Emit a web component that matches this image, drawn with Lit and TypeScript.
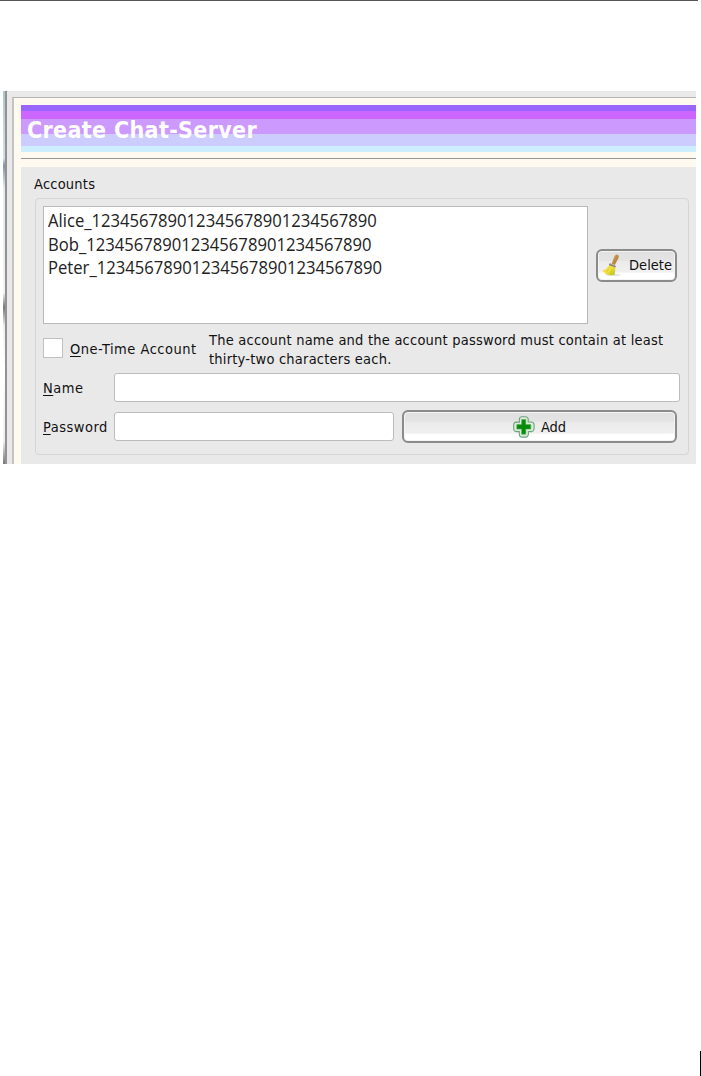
import { LitElement, html, css, svg } from "lit";
import { customElement, property } from "lit/decorators.js";

const broomIcon = svg`
  <defs>
    <linearGradient id="handle" x1="0" y1="0" x2="1" y2="1">
      <stop offset="0" stop-color="#d9ad62" />
      <stop offset="1" stop-color="#a96c32" />
    </linearGradient>
    <linearGradient id="straw" x1="0" y1="0" x2="1" y2="1">
      <stop offset="0" stop-color="#ecc440" />
      <stop offset="0.5" stop-color="#f2e63a" />
      <stop offset="1" stop-color="#b5bd1c" />
    </linearGradient>
  </defs>
  <ellipse cx="12" cy="20.8" rx="8" ry="1.2" fill="#bbb" opacity="0.4" />
  <path d="M13.6 2Q15.6 -.2 17.2 .9Q18.2 2.2 17.2 4.6L13.8 11.1L10.6 9.7Z" fill="url(#handle)" />
  <path d="M8.4 10.7L14.2 13.2Q14.4 17.6 13.6 20.8L9.4 21.2L4.8 20L1.4 16.7Q6.2 15.3 8.4 10.7Z" fill="url(#straw)" />
  <path d="M5 18.2L9.4 13.2M9 20L11.8 14.6" stroke="#d8b32a" stroke-width="0.6" fill="none" />
  <path d="M8.8 9.3L14.9 11.9L14.3 13.5L8 10.9Z" fill="#77737c" />
  <path d="M9.3 10L14.3 12.2" stroke="#c5b5a0" stroke-width="0.6" />
`;

const plusIcon = svg`
  <path d="M6.4 2.6Q6.8 .8 8.6 .7H12.6Q14.6 .8 15.2 2.6V6H18.4Q20.8 6.3 21.1 8.2V13Q20.8 15.3 18.6 15.6H15.4V18.6Q15 20.8 12.8 21.1H8.6Q6.6 20.8 6.3 18.8V15.6H3.2Q.9 15.3 .7 13.2V8.4Q.9 6.3 3 6.1H6.4Z"
    fill="#dcebdc" stroke="#6ba37a" stroke-width="1.1" />
  <path d="M8.6 3.6H12.8V8.6H17.8V13.1H12.8V18.2H8.6V13.1H3.8V8.6H8.6Z" fill="#078b0c" stroke="#55ac55" stroke-width="0.6" />
`;

@customElement("tool-button")
export class ToolButton extends LitElement {
  @property() label = "";
  @property() icon = "";

  static styles = css`
    :host {
      display: block;
      box-sizing: border-box;
    }

    .button {
      box-sizing: border-box;
      width: 100%;
      height: 33px;
      display: flex;
      align-items: center;
      justify-content: center;
      gap: 5px;
      padding: 0;
      border: 2px solid #8b8b8b;
      border-radius: 6px;
      background: linear-gradient(#e0e0e0 0, #e4e4e4 33%, #ebebeb 36%, #f0f0f0 72%, #fff 78%);
      box-shadow: inset 0 0 0 1px #f4f4f4;
      color: #111;
      font: inherit;
      letter-spacing: 0;
    }

    .icon {
      flex: none;
      width: 22px;
      height: 22px;
    }

    .text {
      padding: 1px 0 0 1px;
    }
  `;

  render() {
    return html`
      <button class="button">
        <svg class="icon" viewBox="0 0 22 22">${this.icon === "broom" ? broomIcon : plusIcon}</svg>
        <span class="text">${this.label}</span>
      </button>
    `;
  }
}

@customElement("app-root")
export class AppRoot extends LitElement {
  accounts = ["Alice", "Bob", "Peter"];

  static styles = css`
    :host {
      display: block;
      box-sizing: border-box;
      position: relative;
      height: 1076px;
      overflow: hidden;
      background: white;
      color: #111;
      font: 14.5px/19px "DejaVu Sans Condensed", "DejaVu Sans", sans-serif;
      font-stretch: condensed;
      letter-spacing: 0.22px;
    }

    *, *:before, *:after {
      box-sizing: border-box;
    }

    .page-rule {
      width: 698px;
      height: 1px;
      background: #555;
    }

    .change-bar {
      position: absolute;
      right: 0;
      bottom: 0;
      width: 1px;
      height: 25px;
      background: #000;
    }

    .window {
      display: flex;
      width: 693px;
      height: 373px;
      margin: 90px 0 0 3px;
      background: #e9e9e9;
    }

    .edge {
      width: 4px;
      border-right: 2px solid #929292;
      background: linear-gradient(#a9c9cb 0, #c6d4db 9%, #cfe2ee 18%, #8297ad 20%, #e4edf0 26%, #ececec 45%, #f4f4f4 54%, #777 58%, #eee 63%, #fff 75%, #eee 94%, #777 100%);
    }

    .panel {
      flex: 1;
      display: flex;
      flex-direction: column;
      margin: 6px 0 0 5px;
      padding: 7px 0 0 7px;
      border-top: 1px solid #b4b4b4;
      border-left: 2px solid #c4c4c4;
      background: #fffaf0;
    }

    .banner {
      height: 47px;
      margin: 0;
      padding: 11px 0 0 6px;
      background: linear-gradient(#9966ff 0 6px, #cc66ff 6px 14px, #cc99ff 14px 29.5px, #ccccff 29.5px 41px, #cceeff 41px);
      color: white;
      font: bold 23px/28px "DejaVu Sans Condensed", "DejaVu Sans", sans-serif;
      font-stretch: condensed;
      letter-spacing: 0.35px;
    }

    .rule {
      height: 1px;
      margin: 6px 0 8px;
      background: #969696;
    }

    .content {
      flex: 1;
      padding: 8px 7px 0 14px;
      background: #e9e9e9;
    }

    .group-title {
      margin-left: -1px;
      height: 23px;
    }

    .group {
      display: flex;
      flex-direction: column;
      height: 257px;
      padding: 7px 8px 0 7px;
      border: 1px solid #d5d5d5;
      border-radius: 4px;
    }

    .row {
      display: flex;
      align-items: center;
    }

    .accounts {
      width: 545px;
      height: 118px;
      margin: 0;
      padding: 2px 4px;
      border: 1px solid #b9b9b9;
      background: white;
      list-style: none;
      font: 18px/23.5px "Open Sans", sans-serif;
      letter-spacing: 0;
      color: #222;
    }

    .account {
      transform: scaleX(0.924);
      transform-origin: left;
    }

    .delete {
      width: 81px;
      margin-left: 8px;
    }

    .options {
      height: 49px;
    }

    .checkbox {
      width: 20px;
      height: 20px;
      margin-bottom: 1px;
      border: 1px solid #c0c0c0;
      background: white;
    }

    .one-time {
      width: 146px;
      padding: 1px 0 0 7px;
      letter-spacing: 0.5px;
    }

    .hint {
      margin: 2px 0 0;
      white-space: nowrap;
    }

    .label {
      width: 71px;
      padding-top: 1px;
      letter-spacing: 0.5px;
    }

    .key {
      text-decoration: underline;
      text-underline-offset: 2px;
    }

    .field {
      height: 29px;
      border: 1px solid #bcbcbc;
      border-radius: 3px;
      background: white;
    }

    .name {
      width: 566px;
    }

    .password {
      width: 280px;
    }

    .add {
      width: 275px;
      margin-left: 8px;
    }

    .password-row {
      margin-top: 8px;
    }
  `;

  render() {
    return html`
      <div class="page-rule"></div>
      <div class="window">
        <div class="edge"></div>
        <div class="panel">
          <h1 class="banner">Create Chat-Server</h1>
          <div class="rule"></div>
          <div class="content">
            <div class="group-title">Accounts</div>
            <div class="group">
              <div class="row">
                <ul class="accounts">
                  ${this.accounts.map((name) => html`<li class="account">${name}_${"1234567890".repeat(3)}</li>`)}
                </ul>
                <tool-button class="delete" icon="broom" label="Delete"></tool-button>
              </div>
              <div class="row options">
                <div class="checkbox"></div>
                <div class="one-time"><span class="key">O</span>ne-Time Account</div>
                <p class="hint">
                  The account name and the account password must contain at least<br />thirty-two characters each.
                </p>
              </div>
              <div class="row">
                <div class="label"><span class="key">N</span>ame</div>
                <div class="field name"></div>
              </div>
              <div class="row password-row">
                <div class="label"><span class="key">P</span>assword</div>
                <div class="field password"></div>
                <tool-button class="add" icon="plus" label="Add"></tool-button>
              </div>
            </div>
          </div>
        </div>
      </div>
      <div class="change-bar"></div>
    `;
  }
}
